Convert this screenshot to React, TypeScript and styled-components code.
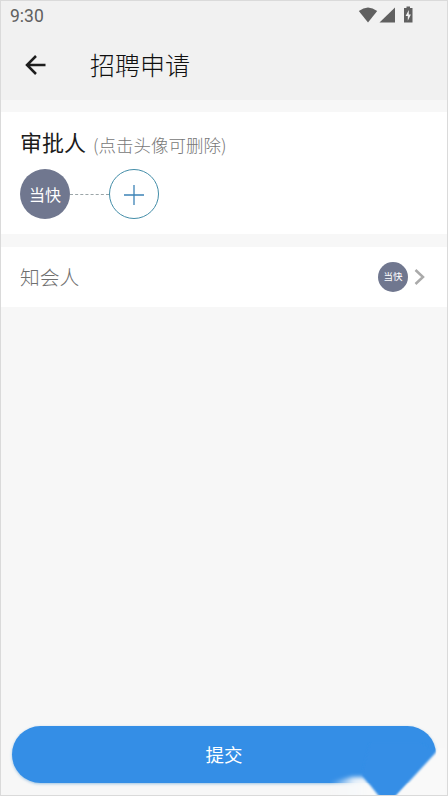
import React from "react";
import styled, { createGlobalStyle } from "styled-components";

const GlobalStyle = createGlobalStyle`
  * { box-sizing: border-box; }
  body { margin: 0; }
`;

const Screen = styled.div`
  position: relative;
  width: 448px;
  height: 796px;
  display: flex;
  flex-direction: column;
  overflow: hidden;
  background: #f7f7f7;
  border: 1px solid #dadada;
  font-family: "Noto Sans CJK SC", sans-serif;
  font-weight: 300;
`;

const Header = styled.header`
  height: 99px;
  flex: none;
  background: #f1f1f1;
`;

const StatusBar = styled.div`
  height: 28px;
  display: flex;
  align-items: center;
  justify-content: space-between;
  padding: 0 33px 0 9px;
  color: #606060;
`;

const Clock = styled.span`
  font: 17.5px/28px Roboto, sans-serif;
  padding-top: 1px;
`;

const StatusIcons = styled.svg`
  display: block;
  width: 56px;
  height: 18px;
`;

const TitleBar = styled.div`
  height: 71px;
  display: flex;
  align-items: center;
  gap: 43px;
  padding: 0 0 0 23px;
`;

const BackIcon = styled.svg`
  width: 23px;
  height: 22px;
`;

const Title = styled.h1`
  margin: 0;
  padding-bottom: 1px;
  font-size: 25px;
  font-weight: 300;
  line-height: 36px;
  color: #101010;
`;

const Card = styled.section<{ $height: number }>`
  flex: none;
  height: ${(p) => p.$height}px;
  margin-top: 12px;
  padding: 0 19px;
  background: #fff;
`;

const Heading = styled.div`
  display: flex;
  align-items: baseline;
  gap: 7px;
  height: 57px;
  padding-top: 13px;
`;

const HeadingText = styled.span`
  font-size: 22px;
  font-weight: 400;
  line-height: 32px;
  color: #1c1c1c;
`;

const Hint = styled.span`
  position: relative;
  top: 1px;
  font-size: 17.5px;
  line-height: 26px;
  color: #777;
`;

const Approvers = styled.div`
  display: flex;
  align-items: center;
`;

const Avatar = styled.div<{ $size: number; $font: number }>`
  width: ${(p) => p.$size}px;
  height: ${(p) => p.$size}px;
  padding-bottom: 1px;
  display: flex;
  align-items: center;
  justify-content: center;
  border-radius: 50%;
  background: #70778f;
  color: #fff;
  font-size: ${(p) => p.$font}px;
  font-weight: 400;
  line-height: 1;
`;

const Connector = styled.div`
  width: 39px;
  border-top: 1px dashed #9ba5a8;
`;

const AddButton = styled.button`
  width: 50px;
  height: 50px;
  padding: 1px 0 0;
  display: flex;
  align-items: center;
  justify-content: center;
  border: 1.4px solid #438da8;
  border-radius: 50%;
  background: #fff;
`;

const Row = styled(Card)`
  display: flex;
  align-items: center;
  margin-top: 13px;
`;

const RowLabel = styled.span`
  flex: 1;
  padding-bottom: 1px;
  font-size: 19.8px;
  line-height: 30px;
  color: #707070;
`;

const Chevron = styled.svg`
  width: 11px;
  height: 16px;
  margin: 0 3px 0 6px;
`;

const Footer = styled.footer`
  margin-top: auto;
  padding: 0 11px 12px;
`;

const Submit = styled.button`
  display: block;
  width: 424px;
  height: 57px;
  padding: 0;
  border: 0;
  border-radius: 29px;
  background: #348ee6;
  box-shadow: 0 1px 3px #9dc3e2;
  color: #fff;
  font-family: inherit;
  font-size: 18.5px;
  line-height: 57px;
`;

const CornerAccent = styled.svg`
  position: absolute;
  right: -1px;
  bottom: -1px;
  width: 118px;
  height: 54px;
  pointer-events: none;
`;

export default function App() {
  return (
    <>
      <GlobalStyle />
      <Screen>
        <Header>
          <StatusBar>
            <Clock>9:30</Clock>
            <StatusIcons viewBox="0 0 56 18" fill="#606060">
              <path d="M.8 5Q10 -2 19.2 5L10 16.5Z" />
              <path d="M37 1.5V16.5H21.5Z" />
              <path d="M48.5 2V.5H52V2H54.5V16.5H46V2Z" />
              <path d="M50.8 4L47.6 10H49.8V14.8L52.9 8.6H50.8Z" fill="#f1f1f1" />
            </StatusIcons>
          </StatusBar>
          <TitleBar>
            <BackIcon viewBox="0 0 23 22" fill="none" stroke="#1d1d1d" strokeWidth="2.5">
              <path d="M21.5 11H3M12 2L3 11L12 20" />
            </BackIcon>
            <Title>招聘申请</Title>
          </TitleBar>
        </Header>

        <Card $height={122}>
          <Heading>
            <HeadingText>审批人</HeadingText>
            <Hint>(点击头像可删除)</Hint>
          </Heading>
          <Approvers>
            <Avatar $size={50} $font={16}>当快</Avatar>
            <Connector />
            <AddButton aria-label="添加审批人">
              <svg width="20" height="20" fill="none" stroke="#3c83b6" strokeWidth="1.3">
                <path d="M10 0V20M0 10H20" />
              </svg>
            </AddButton>
          </Approvers>
        </Card>

        <Row $height={60}>
          <RowLabel>知会人</RowLabel>
          <Avatar $size={30} $font={9.5}>当快</Avatar>
          <Chevron viewBox="0 0 11 16" fill="none" stroke="#aaa" strokeWidth="2.5">
            <path d="M1.5 1L9 8L1.5 15" />
          </Chevron>
        </Row>

        <Footer>
          <Submit>提交</Submit>
        </Footer>

        <CornerAccent viewBox="330 742 118 54">
          <defs>
            <linearGradient id="fade" x1="330" y1="0" x2="370" y2="0" gradientUnits="userSpaceOnUse">
              <stop offset="0" stopColor="#f7f9fb" stopOpacity="0" />
              <stop offset="0.6" stopColor="#f7f9fb" stopOpacity="0.9" />
              <stop offset="1" stopColor="#fafafa" />
            </linearGradient>
            <filter id="soft" x="-10%" y="-10%" width="120%" height="120%">
              <feGaussianBlur stdDeviation="0.8" />
            </filter>
            <filter id="haze" x="-20%" y="-40%" width="140%" height="180%">
              <feGaussianBlur stdDeviation="2" />
            </filter>
          </defs>
          <path d="M328 783L352 777L364 777L385 800H328Z" fill="url(#fade)" filter="url(#haze)" />
          <path d="M362 775L382 800H393L436 753L420 742H370Z" fill="#348ee6" filter="url(#soft)" />
          <path d="M438 749L434.5 754L395 797H446V749Z" fill="#f9f9f9" filter="url(#soft)" />
        </CornerAccent>
      </Screen>
    </>
  );
}
